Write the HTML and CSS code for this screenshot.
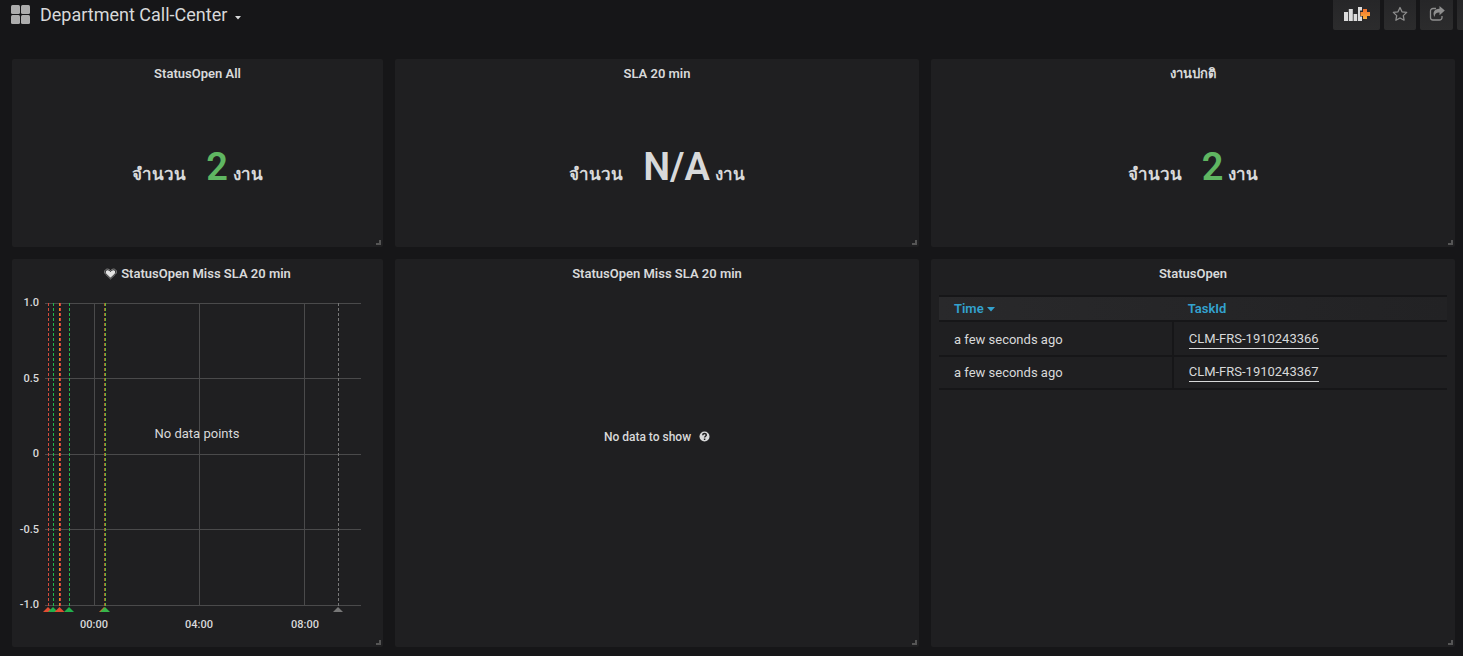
FILE: index.html
```html
<!DOCTYPE html>
<html lang="en">
<head>
<meta charset="utf-8">
<title>Department Call-Center</title>
<link rel="stylesheet" href="styles.css">
</head>
<body>
<header class="navbar">
  <button class="dash-title" type="button">
    <svg class="dash-icon" viewBox="0 0 20 20" aria-hidden="true"><rect x="0" y="0" width="9" height="9" rx="1.5"/><rect x="10" y="0" width="9" height="9" rx="1.5"/><rect x="0" y="10" width="9" height="9" rx="1.5"/><rect x="10" y="10" width="9" height="9" rx="1.5"/></svg>
    <span>Department Call-Center</span>
    <svg class="caret" viewBox="0 0 6 4" aria-hidden="true"><path d="M0 0H6L3 3.4Z"/></svg>
  </button>
  <div class="tools">
    <button class="tool tool-wide" type="button" aria-label="Add panel">
      <svg width="26" height="16" viewBox="0 0 26 16" aria-hidden="true"><path fill="#dcdcdc" d="M0 6h4v9H0zM4.800 3h4v12h-4zM9.600 8h3.600v7H9.600zM14 1h4v3.500h-2v6h2V15h-4z"/><path fill="url(#plus)" d="M19 3h4v3h3v4h-3v3h-4v-3h-2.500v-4H19z"/><defs><linearGradient id="plus" x1="0" y1="0" x2="0" y2="1"><stop offset="0" stop-color="#f0702c"/><stop offset="1" stop-color="#fbb03b"/></linearGradient></defs></svg>
    </button>
    <button class="tool tool-star" type="button" aria-label="Mark as favorite">
      <svg width="16" height="16" viewBox="0 0 16 16" aria-hidden="true"><path fill="none" stroke="#8e8e8e" stroke-width="1.3" stroke-linejoin="round" d="M8 1.500l2 4.300 4.700.6-3.400 3.200.8 4.600L8 12l-4.100 2.200.8-4.600L1.300 6.400 6 5.800z"/></svg>
    </button>
    <button class="tool" type="button" aria-label="Share dashboard">
      <svg width="16" height="16" viewBox="0 0 16 16" aria-hidden="true"><path fill="none" stroke="#8e8e8e" stroke-width="1.3" d="M7 2.500H4A2.500 2.500 0 0 0 1.500 5v6.500A2.500 2.500 0 0 0 4 14h6.500a2.500 2.500 0 0 0 2.500-2.500V10"/><path fill="#8e8e8e" d="M10.500 0L15.800 4.500l-5.300 4.700V6.600C7.500 6.400 6 7.500 5.600 11 3.200 7 5 2.800 10.500 2.700z"/></svg>
    </button>
    <button class="tool tool-edge" type="button" aria-label="More"></button>
  </div>
</header>
<main class="dashboard">
  <section class="panel">
    <h2 class="panel-title">StatusOpen All</h2>
    <p class="stat"><span class="prefix">จำนวน</span><span class="value good">2</span><span>งาน</span></p>
  </section>
  <section class="panel">
    <h2 class="panel-title">SLA 20 min</h2>
    <p class="stat"><span class="prefix">จำนวน</span><span class="value">N/A</span><span>งาน</span></p>
  </section>
  <section class="panel">
    <h2 class="panel-title">งานปกติ</h2>
    <p class="stat"><span class="prefix">จำนวน</span><span class="value good">2</span><span>งาน</span></p>
  </section>
  <section class="panel">
    <h2 class="panel-title"><svg class="heart" viewBox="0 0 14 12" aria-hidden="true"><path fill="#1f1f21" stroke="#8e8e8e" d="M7 11.300L1.500 6C-.8 3.200 1.600.5 4 .7 5.500.8 6.500 1.600 7 2.400 7.500 1.600 8.500.8 10 .7c2.400-.2 4.800 2.500 2.500 5.300z"/><path fill="#e3e3e3" d="M7 10L2.500 5.700C1 3.500 2.500 1.800 4 1.900c1.500 0 2.500 1 3 2 .5-1 1.500-2 3-2 1.500-.1 3 1.600 1.500 3.800z"/></svg>StatusOpen Miss SLA 20 min</h2>
    <svg class="graph" viewBox="0 0 371 350" role="img" aria-label="No data points">
      <g class="grid-lines"><path d="M33 15.500H349M33 90.500H349M33 166.500H349M33 241.500H349M33 317.500H349M82.500 15V318M187.500 15V318M292.500 15V318"/></g>
      <g class="events">
        <path stroke="#d44a3a" d="M36.500 15V318"/><path stroke="#1fb84c" d="M41.500 15V318"/><path stroke="#ed8128" d="M47.500 15V318"/><path stroke="#d44a3a" d="M48.500 15V318"/><path stroke="#1fb84c" d="M57.500 15V318"/><path stroke="#a8642c" d="M92.500 15V318"/><path stroke="#62b83c" d="M93.500 15V318"/><path stroke="#777" d="M326.500 15V318"/>
      </g>
      <path fill="#e24d32" d="M31 324l5-5 5 5z"/><path fill="#22b14c" d="M36 324l5-5 5 5z"/><path fill="#e24d32" d="M42.500 324l5-5 5 5z"/><path fill="#22b14c" d="M52 324l5-5 5 5z"/><path fill="#d46a2c" d="M87 324l5-5 5 5z"/><path fill="#38b64a" d="M88 324l5-5 5 5z"/><path fill="#777" d="M321 324l5-5 5 5z"/>
      <g class="ticks" text-anchor="end"><text x="27" y="18">1.0</text><text x="27" y="94">0.5</text><text x="27" y="169">0</text><text x="27" y="245">-0.5</text><text x="27" y="320">-1.0</text></g>
      <g class="ticks" text-anchor="middle"><text x="82" y="340">00:00</text><text x="187" y="340">04:00</text><text x="293" y="340">08:00</text></g>
      <text class="empty-label" x="185" y="150" text-anchor="middle">No data points</text>
    </svg>
  </section>
  <section class="panel">
    <h2 class="panel-title">StatusOpen Miss SLA 20 min</h2>
    <p class="empty">No data to show
      <svg width="11" height="11" viewBox="0 0 11 11" aria-hidden="true"><circle cx="5.500" cy="5.500" r="5" fill="#d8d9da"/><path d="M3.700 4.200C3.800 2 7.300 2.100 7.300 4.100 7.300 5.300 5.600 5.200 5.600 6.600M5.600 7.600V8.900" fill="none" stroke="#1f1f21" stroke-width="1.5"/></svg>
    </p>
  </section>
  <section class="panel">
    <h2 class="panel-title">StatusOpen</h2>
    <table class="tasks">
      <thead><tr><th scope="col">Time <svg width="8" height="5" viewBox="0 0 8 5" aria-hidden="true"><path d="M0 0H8L4 4.500Z" fill="#33a2cf"/></svg></th><th scope="col">TaskId</th></tr></thead>
      <tbody>
        <tr><td>a few seconds ago</td><td><a href="#CLM-FRS-1910243366">CLM-FRS-1910243366</a></td></tr>
        <tr><td>a few seconds ago</td><td><a href="#CLM-FRS-1910243367">CLM-FRS-1910243367</a></td></tr>
      </tbody>
    </table>
  </section>
</main>
</body>
</html>
```
FILE: styles.css
```css
*, *::after { box-sizing: border-box; }

body {
  margin: 0;
  background: #161618;
  color: #d8d9da;
  font: 500 13px/20px Roboto, "Noto Sans", sans-serif;
}

button { font: inherit; color: inherit; border: 0; padding: 0; }

.navbar {
  display: flex;
  justify-content: space-between;
  height: 30px;
  margin-bottom: 29px;
  padding-left: 11px;
}

.dash-title {
  display: flex;
  align-items: center;
  background: none;
  font-size: 18px;
  font-weight: 400;
}
.dash-icon { width: 20px; height: 20px; margin-right: 9px; fill: #adadad; }
.caret { width: 6px; height: 4px; margin: 6px 0 0 8px; fill: #d8d9da; }

.tools { display: flex; gap: 4px; }
.tool {
  display: flex;
  align-items: center;
  justify-content: center;
  width: 33px;
  padding-bottom: 2px;
  background: linear-gradient(#262628, #2c2c2d);
  border-radius: 0 0 2px 2px;
}
.tool-wide { width: 47px; }
.tool-star { width: 32px; }
.tool-edge { width: 6px; border-radius: 0 0 0 2px; }

.dashboard {
  display: grid;
  grid-template-columns: 371fr 524fr 524fr;
  grid-template-rows: 188px auto;
  gap: 12px;
  padding: 0 8px 9px 12px;
}

.panel {
  position: relative;
  display: flex;
  flex-direction: column;
  min-width: 0;
  background: #1f1f21;
  border-radius: 2px;
}
.panel::after {
  content: "";
  position: absolute;
  right: 2px;
  bottom: 2px;
  width: 5px;
  height: 5px;
  border: solid #555;
  border-width: 0 2px 2px 0;
}

.panel-title {
  display: flex;
  align-items: center;
  justify-content: center;
  gap: 4px;
  height: 29px;
  margin: 0;
  padding-top: 1px;
  font-size: 13px;
  font-weight: 600;
}
.heart { width: 13px; height: 12px; }

.stat {
  display: flex;
  flex: 1;
  align-items: baseline;
  justify-content: center;
  gap: 5px;
  margin: 0;
  padding-top: 55px;
  font-size: 17px;
  font-weight: 600;
}
.prefix { margin-right: 15px; }
.value { font-size: 38px; line-height: 48px; }
.good { color: #5fb662; }

.graph { display: block; width: 100%; margin-bottom: 9px; }
.grid-lines { stroke: #4a4a4b; fill: none; }
.events { stroke-dasharray: 3 2; }
.ticks { fill: #d8d9da; font-size: 11px; }
.empty-label { fill: #d8d9da; font-size: 13px; font-weight: 400; }

.empty {
  display: flex;
  flex: 1;
  align-items: center;
  justify-content: center;
  gap: 8px;
  margin: 0;
  padding-bottom: 62px;
  font-size: 12px;
}

.tasks {
  width: calc(100% - 16px);
  margin: 7px 8px 0;
  border-collapse: collapse;
  table-layout: fixed;
}
.tasks thead { background: linear-gradient(90deg, #29292b, #222224); }
.tasks th {
  height: 25px;
  padding: 0 15px;
  border: solid #161618;
  border-width: 2px 0;
  color: #33a2cf;
  text-align: left;
  font-weight: 600;
}
.tasks th:first-child { width: 46%; }
.tasks th svg { vertical-align: middle; }
.tasks td {
  height: 33px;
  padding: 0 15px;
  border-bottom: 2px solid #161618;
  font-weight: 400;
}
.tasks tbody tr:first-child td { height: 35px; padding-top: 2px; }
.tasks td:first-child { border-right: 2px solid #161618; }
.tasks a {
  display: block;
  width: max-content;
  color: inherit;
  line-height: 18px;
  border-bottom: 1px solid #d8d9da;
  text-decoration: none;
}
```
